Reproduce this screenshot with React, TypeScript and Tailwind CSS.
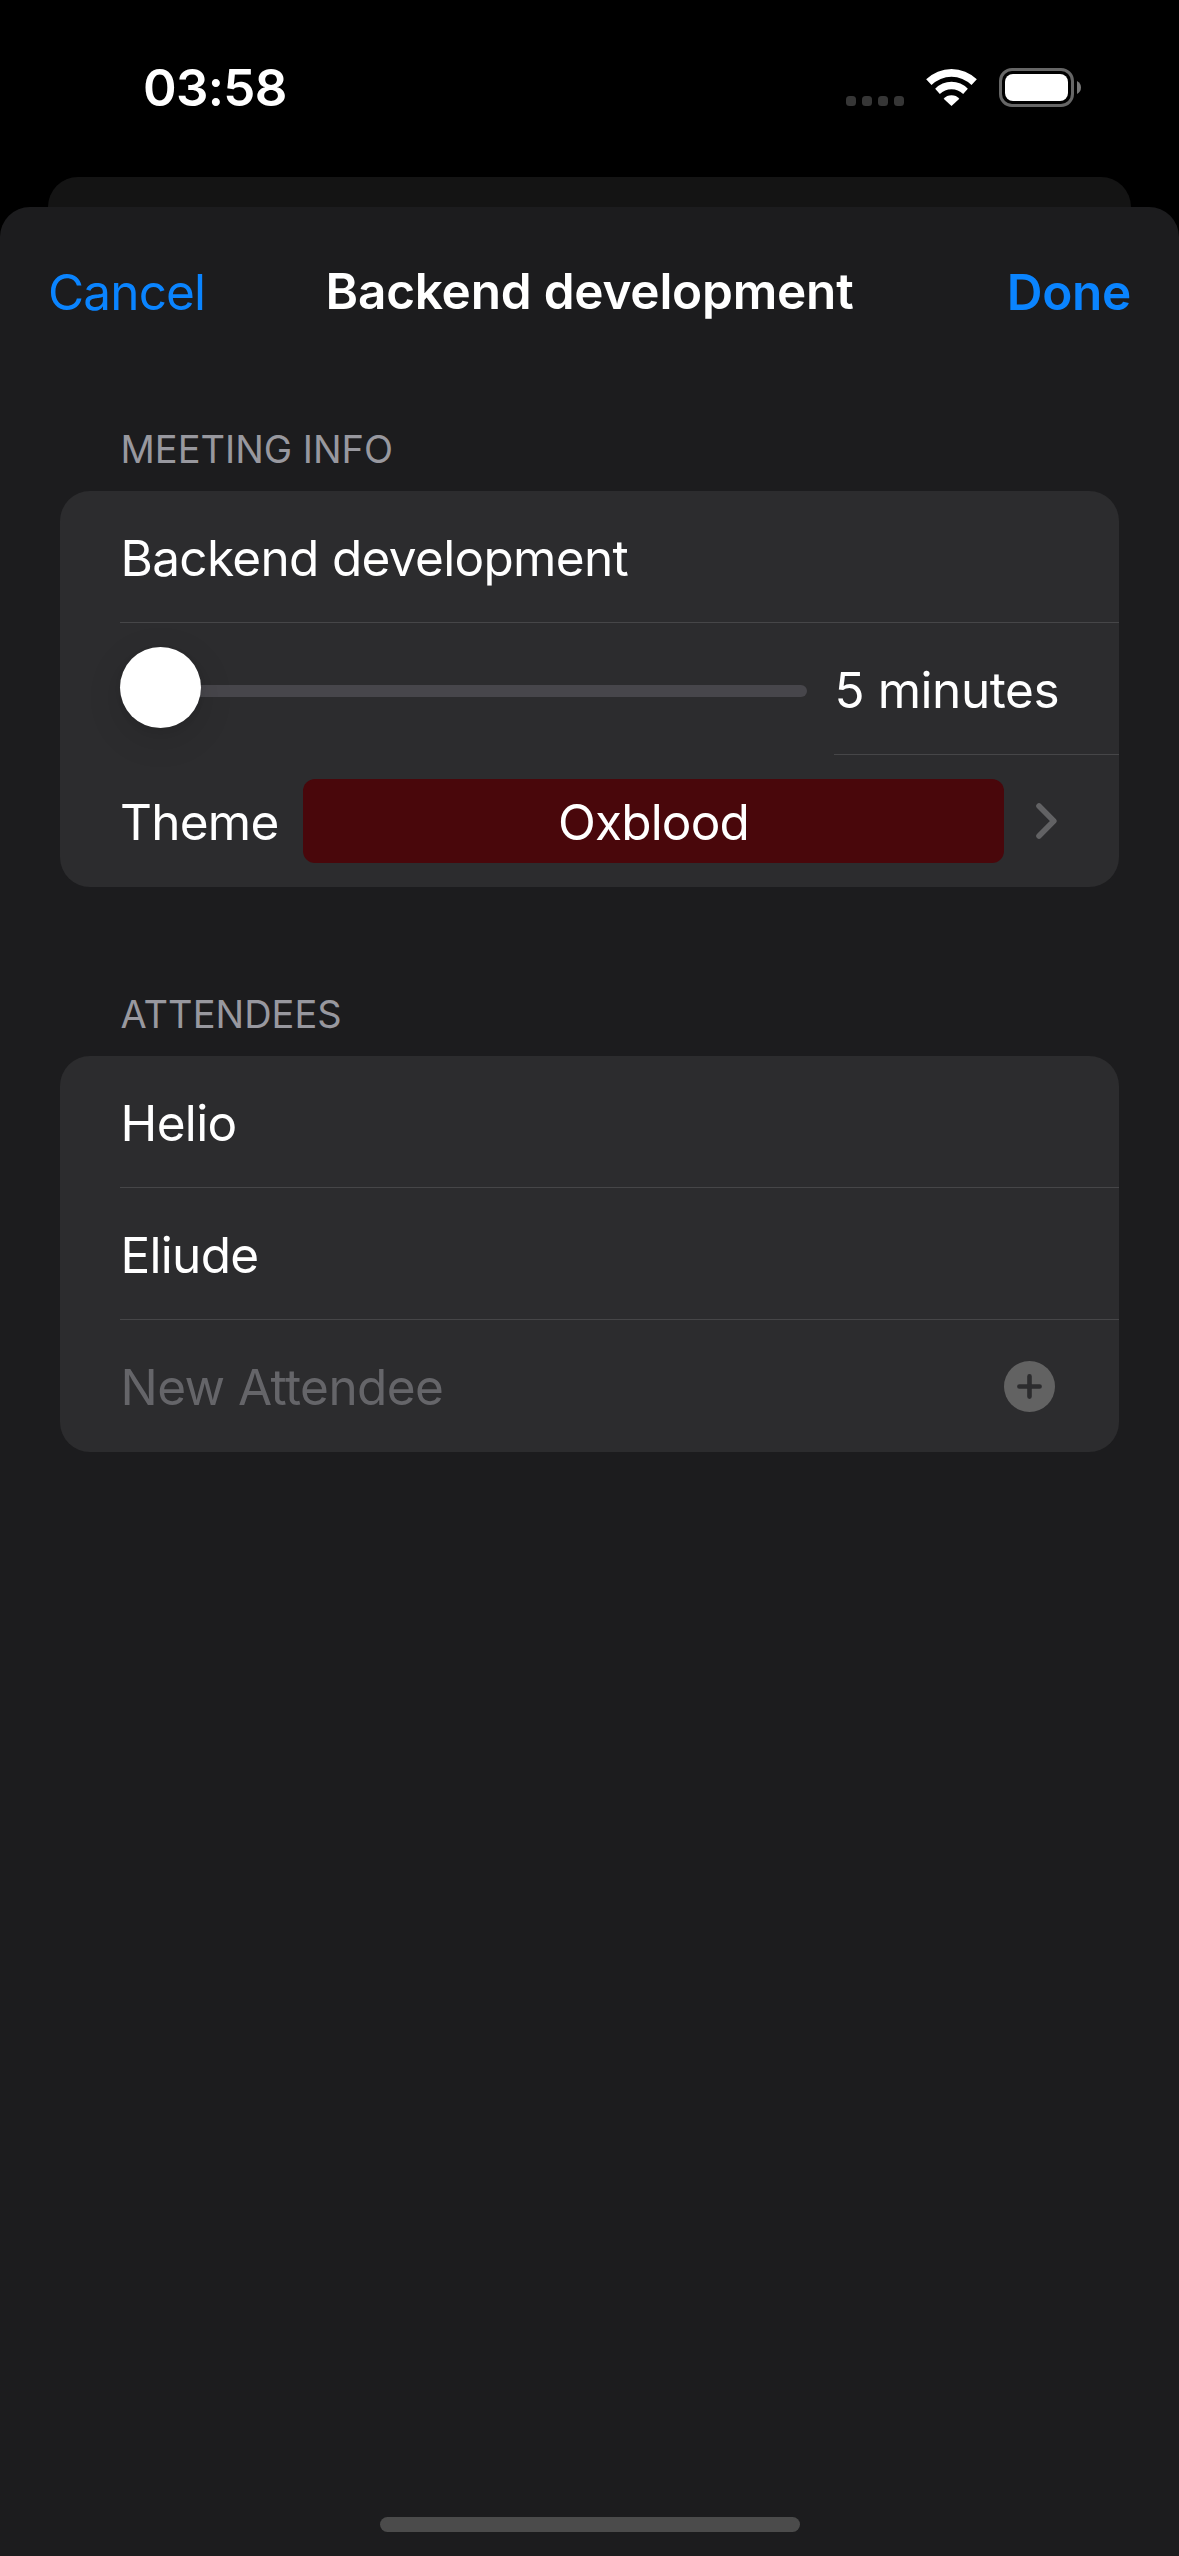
import type { ReactNode } from "react";

function StatusBar() {
  return (
    <header className="flex h-[177px] items-start justify-between pl-[143px] pr-[98px]">
      <span className="mt-[58px] text-[51px] leading-[60px] font-semibold tracking-[-0.7px] text-white">03:58</span>
      <div className="mt-[68px] flex h-[39px] items-start">
        <div className="mt-[28px] flex gap-[6px]">
          {[0, 1, 2, 3].map((dot) => (
            <span key={dot} className="size-[10px] rounded-[3.5px] bg-[#363636]" />
          ))}
        </div>
        <svg className="ml-[22px] mt-px h-[37px] w-[51px]" viewBox="318.5 57 153 111" fill="#fff">
          <path d="M319 88A108.7 108.7 0 0 1 471 88L455 105A85 85 0 0 0 335 105Z" />
          <path d="M346 116A67.7 67.7 0 0 1 444 116L430 132A50.7 50.7 0 0 0 360 132Z" />
          <path d="M371.5 146A32 32 0 0 1 418.5 146L395 168Z" />
        </svg>
        <div className="ml-[22px] flex h-[39px] w-[75px] rounded-[13px] border-[3px] border-[#666] p-[3px]">
          <span className="flex-1 rounded-[8px] bg-white" />
        </div>
        <svg className="ml-[3px] mt-[13px] h-[13px] w-[4px]" viewBox="0 0 4 13" fill="#777">
          <path d="M0 0Q4 2.2 4 6.5T0 13Z" />
        </svg>
      </div>
    </header>
  );
}

function NavBar() {
  return (
    <nav className="grid h-[170px] grid-cols-[1fr_auto_1fr] items-center px-[48px] text-[49.5px] leading-[60px]">
      <button className="justify-self-start text-[#0a84ff] tracking-[-0.85px]">Cancel</button>
      <h1 className="-mt-[2px] font-semibold tracking-[-0.224px] text-white">Backend development</h1>
      <button className="justify-self-end font-semibold tracking-[-0.32px] text-[#0a84ff]">Done</button>
    </nav>
  );
}

function Section({ title, className, children }: { title: string; className: string; children: ReactNode }) {
  return (
    <section className="px-[60px]">
      <h2 className={`text-[38px] leading-[48px] text-[#98989f] ${className}`}>{title}</h2>
      <div className="mt-[18px] overflow-hidden rounded-[30px] bg-[#2c2c2e]">{children}</div>
    </section>
  );
}

function Row({ divider = false, children }: { divider?: boolean; children: ReactNode }) {
  return (
    <div className={`ml-[60px] flex h-[132px] items-center ${divider ? "border-b border-[#464648]" : "pb-px"}`}>
      {children}
    </div>
  );
}

export default function App() {
  return (
    <div className="flex h-[2556px] w-[1179px] flex-col overflow-hidden bg-black font-[Inter,sans-serif]">
      <StatusBar />
      <div className="mx-[48px] h-[60px] shrink-0 rounded-t-[30px] bg-[#141414]" />
      <main className="relative -mt-[30px] flex flex-1 flex-col rounded-t-[30px] bg-[#1c1c1e]">
        <NavBar />
        <div className="pt-[48px]">
          <Section title="MEETING INFO" className="pl-[60.5px] tracking-[-0.02px]">
            <Row divider>
              <span className="mt-[3px] pl-[0.5px] text-[49.5px] leading-[60px] tracking-[-0.678px] text-white">Backend development</span>
            </Row>
            <div className="ml-[60px] flex h-[132px]">
              <div className="relative flex h-full w-[687px] items-center pt-[4px]">
                <div className="h-[12px] w-full rounded-full bg-[#47464b]" />
                <div className="absolute left-0 top-[24px] size-[81px] rounded-full bg-white shadow-[0_10px_36px_rgba(0,0,0,0.12),0_2px_6px_rgba(0,0,0,0.06)]" />
              </div>
              <div className="ml-[27px] flex flex-1 items-center border-b border-[#464648]">
                <span className="mt-[3px] pl-[0.5px] text-[49.5px] leading-[60px] tracking-[-0.443px] text-white">5 minutes</span>
              </div>
            </div>
            <Row>
              <span className="mt-[3px] w-[183px] text-[49.5px] leading-[60px] tracking-[-0.761px] text-white">Theme</span>
              <div className="mt-px flex h-[84px] w-[701px] items-center justify-center rounded-[12px] bg-[#49070b]">
                <span className="mt-[2px] text-[49.5px] leading-[60px] tracking-[-0.838px] text-white">Oxblood</span>
              </div>
              <svg className="ml-[32px] mt-px h-[36px] w-[21px]" viewBox="0 0 21 36" fill="none" stroke="#626264" strokeWidth="5.6" strokeLinecap="round" strokeLinejoin="round">
                <path d="M3 3L17.8 18L3 33" />
              </svg>
            </Row>
          </Section>
          <div className="h-[103px]" />
          <Section title="ATTENDEES" className="pl-[60.5px] tracking-[0.03px]">
            <Row divider>
              <span className="mt-[3px] pl-[0.5px] text-[49.5px] leading-[60px] tracking-[-0.656px] text-white">Helio</span>
            </Row>
            <Row divider>
              <span className="mt-[3px] pl-[0.5px] text-[49.5px] leading-[60px] tracking-[-0.702px] text-white">Eliude</span>
            </Row>
            <Row>
              <span className="mt-[3px] pl-[0.5px] text-[49.5px] leading-[60px] tracking-[-0.568px] text-[#656569]">New Attendee</span>
              <svg className="ml-auto mr-[64px] mt-px h-[51px] w-[51px]" viewBox="0 0 51 51">
                <circle cx="25.5" cy="25.5" r="25.5" fill="#626262" />
                <path d="M15.4 25.5H35.6M25.5 15.4V35.6" stroke="#2c2c2e" strokeWidth="4.6" strokeLinecap="round" />
              </svg>
            </Row>
          </Section>
        </div>
        <div className="mx-auto mb-[24px] mt-auto h-[15px] w-[420px] rounded-full bg-[#4b4b4b]" />
      </main>
    </div>
  );
}
